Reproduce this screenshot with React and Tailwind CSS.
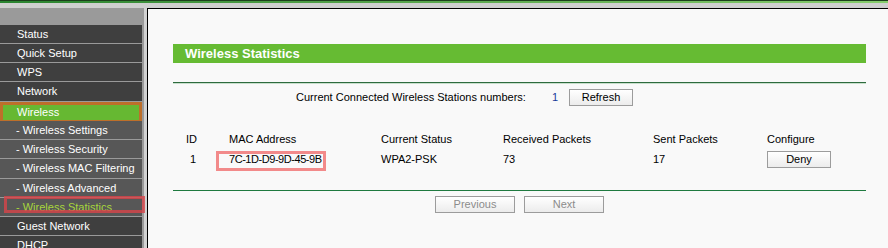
import React from 'react';

const menu = [
  { label: 'Status', kind: 'top' },
  { label: 'Quick Setup', kind: 'top' },
  { label: 'WPS', kind: 'top' },
  { label: 'Network', kind: 'top', tall: true },
  { label: 'Wireless', kind: 'active' },
  { label: '- Wireless Settings', kind: 'sub' },
  { label: '- Wireless Security', kind: 'sub' },
  { label: '- Wireless MAC Filtering', kind: 'sub', tall: true },
  { label: '- Wireless Advanced', kind: 'sub' },
  { label: '- Wireless Statistics', kind: 'current' },
  { label: 'Guest Network', kind: 'top' },
  { label: 'DHCP', kind: 'top' },
];

const Btn = ({ children, className = '', disabled }) => (
  <button
    className={`h-[17px] border border-[#9c9c9c] bg-gradient-to-b from-white to-[#ececec] text-[11px] leading-none ${
      disabled ? 'text-[#8c8c8c]' : 'text-black'
    } ${className}`}
  >
    {children}
  </button>
);

const Sidebar = () => (
  <div className="relative w-[143px] shrink-0 bg-[#9a9a9a] pt-[17px]">
    {menu.map((item) => {
      const base = 'w-[142px] flex items-center border-b border-[#9a9a9a]';
      const height = item.tall ? 'h-[20px]' : 'h-[19px]';
      if (item.kind === 'active') {
        return (
          <div key={item.label} className={`${base} ${height} bg-[#66b832] border-[3px] border-[#bd6f2a] pl-[14px] text-white`}>
            {item.label}
          </div>
        );
      }
      if (item.kind === 'current') {
        return (
          <div key={item.label} className={`${base} ${height} bg-[#575757] pl-[16px] text-[#a8d63c]`}>
            {item.label}
          </div>
        );
      }
      return (
        <div
          key={item.label}
          className={`${base} ${height} ${item.kind === 'sub' ? 'bg-[#575757] pl-[16px]' : 'bg-[#3f3f3f] pl-[17px]'} text-white`}
        >
          {item.label}
        </div>
      );
    })}
    {/* highlight box drawn over the current page entry */}
    <div className="absolute left-[4px] top-[188px] w-[141px] h-[17px] border-[3px] border-[#d8454a]/80" />
  </div>
);

const cols = ['w-[56px]', 'w-[152px]', 'w-[122px]', 'w-[150px]', 'w-[114px]', 'flex-1'];

export default function App() {
  return (
    <div className="w-[888px] h-[248px] overflow-hidden bg-[#cfcfcf] flex flex-col font-['Liberation_Sans',Arial,sans-serif] text-[11px]">
      <div className="h-[3px] shrink-0 border-t border-[#1c3f1c] bg-gradient-to-r from-[#2a8430] to-[#86cc6c]" />
      <div className="h-[5px] shrink-0" />
      <div className="flex flex-1 min-h-0">
        <Sidebar />
        <div className="w-[4px] shrink-0 border-l border-[#9a9a9a] bg-[#d2d2d2]" />
        <div className="flex-1 border-l border-t border-black bg-[#f9f9f9] pt-[35px] pl-[25px] pr-[22px] text-black">
          <div className="h-[19px] bg-[#66bb33] pl-[12px] flex items-center text-white font-bold text-[13px]">
            Wireless Statistics
          </div>
          <div className="mt-[19px] h-px bg-[#2e6b3e]" />
          <div className="h-px bg-[#c8dfcc]" />

          <div className="mt-[5px] flex items-center h-[17px]">
            <span className="ml-[123px] w-[256px]">Current Connected Wireless Stations numbers:</span>
            <span className="w-[17px] text-[#1a3a9a]">1</span>
            <Btn className="w-[64px]">Refresh</Btn>
          </div>

          <div className="mt-[24px] flex items-center h-[18px]">
            <span className={`${cols[0]} pl-[13px]`}>ID</span>
            <span className={cols[1]}>MAC Address</span>
            <span className={cols[2]}>Current Status</span>
            <span className={cols[3]}>Received Packets</span>
            <span className={cols[4]}>Sent Packets</span>
            <span className={cols[5]}>Configure</span>
          </div>
          <div className="mt-[2px] flex items-center h-[18px]">
            <span className={`${cols[0]} pl-[17px]`}>1</span>
            <span className={`${cols[1]} relative h-full flex items-center tracking-[-0.45px]`}>
              7C-1D-D9-9D-45-9B
              <span className="absolute left-[-13px] top-[1px] w-[110px] h-[20px] border-[3px] border-[#f28a8a]" />
            </span>
            <span className={cols[2]}>WPA2-PSK</span>
            <span className={cols[3]}>73</span>
            <span className={cols[4]}>17</span>
            <span className={cols[5]}>
              <Btn className="w-[64px]">Deny</Btn>
            </span>
          </div>

          <div className="mt-[22px] h-px bg-[#1f7a40]" />

          <div className="mt-[5px] flex justify-center gap-[9px]">
            <Btn disabled className="w-[80px]">Previous</Btn>
            <Btn disabled className="w-[80px]">Next</Btn>
          </div>
        </div>
      </div>
    </div>
  );
}
